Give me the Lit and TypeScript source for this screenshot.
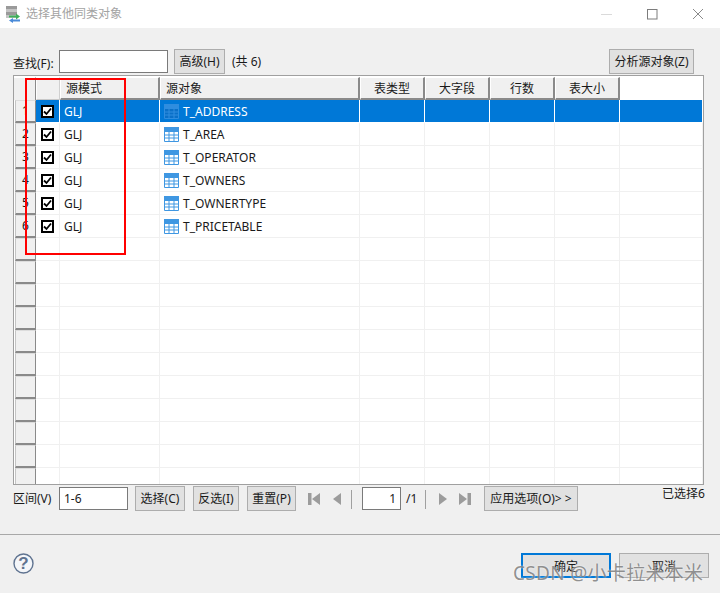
import { LitElement, html, css } from "lit";
import { customElement } from "lit/decorators.js";

const ROWS = ["T_ADDRESS", "T_AREA", "T_OPERATOR", "T_OWNERS", "T_OWNERTYPE", "T_PRICETABLE"];
const TOTAL_ROWS = 17;

const tableIcon = (selected: boolean) => {
  const c = selected ? "#2f8ddf" : "#3f97e2";
  const bg = selected ? "#0a70c8" : "#ffffff";
  return html`<svg class="ticon" width="15" height="15" viewBox="0 0 15 15">
    <rect x="0" y="0" width="15" height="15" fill="${bg}"/>
    <rect x="0" y="0" width="15" height="5" fill="${c}"/>
    <path d="M0.5 5V14.5H14.5V5M0 8H15M0 11H15M5 5V15M10 5V15" fill="none" stroke="${c}" stroke-width="1"/>
  </svg>`;
};

@customElement("app-root")
export class AppRoot extends LitElement {
  static styles = css`
    :host {
      display: block;
      width: 720px;
      height: 593px;
      font-family: "Noto Sans", "Noto Sans CJK SC", sans-serif;
      font-size: 12px;
      color: #1a1a1a;
    }
    .dialog {
      position: relative;
      width: 720px;
      height: 593px;
      background: #f0f0f0;
      display: flex;
      flex-direction: column;
      overflow: hidden;
    }
    .titlebar {
      height: 28px;
      flex: none;
      background: #fff;
      display: flex;
      align-items: center;
      padding-left: 6px;
      gap: 5px;
      color: #a3a3a3;
      font-size: 12px;
    }
    .title-text { flex: 1; padding-bottom: 2px; }
    .winbtns { display: flex; align-items: center; margin-right: -1px; }
    .winbtn { width: 46px; height: 24px; display: flex; align-items: center; justify-content: center; }
    .toolbar {
      height: 47px;
      flex: none;
      box-sizing: border-box;
      padding: 21px 26px 0 13px;
      display: flex;
      align-items: flex-start;
    }
    .label { line-height: 18px; white-space: nowrap; }
    .find-label { margin-top: 6px; width: 46px; }
    .text {
      box-sizing: border-box;
      border: 1px solid #7a7a7a;
      background: #fff;
      font: inherit;
      color: #1a1a1a;
      padding: 0 4px;
      outline: none;
      margin: 0;
    }
    .find { width: 109px; height: 23px; margin-top: 1px; }
    .btn {
      box-sizing: border-box;
      height: 25px;
      border: 1px solid #adadad;
      background: #e1e1e1;
      font: inherit;
      color: #1a1a1a;
      padding: 0 0 1px;
      margin: 0;
      display: flex;
      align-items: center;
      justify-content: center;
      white-space: nowrap;
    }
    .adv { width: 51px; margin-left: 6px; }
    .count { margin-left: 7px; margin-top: 4px; }
    .spacer { flex: 1; }
    .analyze { width: 85px; }
    .table {
      box-sizing: border-box;
      margin: 0 16px 0 13px;
      width: 691px;
      height: 410px;
      flex: none;
      border: 1px solid #a0a0a0;
      background: #fff;
      padding-top: 1px;
      overflow: hidden;
    }
    .row {
      display: grid;
      grid-template-columns: 22px 24px 100px 200px 65px 65px 65px 65px 1fr;
    }
    .head { height: 23px; }
    .hcell {
      box-sizing: border-box;
      background: #f0f0f0;
      border-top: 1px solid #fff;
      border-left: 1px solid #fff;
      border-right: 2px solid #8a8a8a;
      border-bottom: 2px solid #8a8a8a;
      display: flex;
      align-items: center;
      justify-content: center;
      line-height: 1;
      padding-top: 1px;
    }
    .hcell.left { justify-content: flex-start; padding-left: 5px; }
    .hcell.blank { background: #fff; border: 0; }
    .hcell.corner { border-right: 1px solid #8a8a8a; border-bottom: 0; border-left: 0; background: #f0f0f0; }
    .hcell.checkhead { border-right: 1px solid #d0d0d0; border-bottom: 1px solid #c8c8c8; }
    .rows { height: 385px; overflow: hidden; }
    .drow { height: 23px; }
    .cell {
      box-sizing: border-box;
      border-right: 1px solid #f0f0f0;
      border-bottom: 1px solid #f0f0f0;
      display: flex;
      align-items: center;
      padding-left: 4px;
      white-space: nowrap;
      line-height: 1;
    }
    .txt { padding-top: 2px; }
    .num {
      box-sizing: border-box;
      background: #f0f0f0;
      border-top: 1px solid #dcdcdc;
      border-left: 1px solid #c4c4c4;
      border-bottom: 2px solid #8a8a8a;
      border-right: 1px solid #8a8a8a;
      margin-left: 1px;
      text-align: center;
      line-height: 20px;
      color: #1a1a1a;
      overflow: hidden;
    }
    .chk { padding-left: 5px; justify-content: flex-start; }
    .box {
      box-sizing: border-box;
      width: 13px;
      height: 13px;
      border: 2.5px solid #000;
      background: #fff;
      display: flex;
      align-items: center;
      justify-content: center;
    }
    .sel .cell { background: #0078d7; color: #fff; border-bottom-color: #fff; border-right-color: #fff; }
    .ticon { margin-right: 4px; flex: none; }
    .pager {
      height: 50px;
      flex: none;
      box-sizing: border-box;
      padding: 1px 0 0 13px;
      display: flex;
      align-items: flex-start;
      border-bottom: 1px solid #a8a8a8;
    }
    .range-label { width: 46px; margin-top: 4px; }
    .range { width: 69px; height: 23px; margin-top: 1px; }
    .sel-btn { width: 50px; margin-left: 7px; }
    .inv-btn { width: 46px; margin-left: 8px; }
    .reset-btn { width: 49px; margin-left: 8px; }
    .icons { display: flex; align-items: center; height: 24px; margin-top: 1px; }
    .icons svg { display: block; flex: none; }
    .first { margin-left: 12px; }
    .prev { margin-left: 12px; }
    .next { margin-left: 12px; }
    .last { margin-left: 11px; }
    .vsep { width: 1px; height: 19px; background: #a0a0a0; }
    .vsep-a { margin-left: 9px; }
    .page { width: 39px; height: 23px; margin: 1px 0 0 10px; text-align: right; padding-right: 4px; }
    .of { margin: 4px 0 0 5px; width: 19px; }
    .apply { width: 94px; margin-left: 13px; }
    .selected { margin-left: 84px; margin-top: 0; line-height: 16px; }
    .footer {
      flex: 1;
      box-sizing: border-box;
      padding: 18px 11px 0 13px;
      display: flex;
      align-items: flex-start;
    }
    .help { display: block; margin-top: 0; }
    .ok {
      width: 90px;
      height: 25px;
      border: 2px solid #0078d7;
      padding: 0;
    }
    .cancel { width: 90px; margin-left: 8px; padding: 0; }
    .redbox {
      position: absolute;
      left: 25px;
      top: 78px;
      width: 101px;
      height: 177px;
      box-sizing: border-box;
      border: 2px solid #ff0000;
      pointer-events: none;
    }
    .watermark {
      position: absolute;
      left: 513px;
      top: 560px;
      font-size: 19px;
      line-height: 26px;
      letter-spacing: 0.3px;
      color: rgba(110, 110, 110, 0.75);
      text-shadow: 0 0 2px rgba(255, 255, 255, 0.9);
      white-space: nowrap;
      pointer-events: none;
    }
  `;

  render() {
    const rows = Array.from({ length: TOTAL_ROWS }, (_, i) => i);
    return html`
      <div class="dialog">
        <div class="titlebar">
          <svg width="15" height="17" viewBox="0 0 15 17">
            <rect x="0" y="0" width="11" height="3" fill="#9a9a9a"/>
            <rect x="0" y="3" width="11" height="3" fill="#c4c4c4"/>
            <rect x="0" y="6" width="11" height="3" fill="#9a9a9a"/>
            <rect x="0" y="9" width="11" height="3" fill="#c4c4c4"/>
            <path d="M3 9.5H10V7.5L14 10.5L10 13.5V11.5H3Z" fill="#3fae5a"/>
            <path d="M14 13.5H7V12L3 14.5L7 17V15.5H14Z" fill="#4a8ad8"/>
          </svg>
          <span class="title-text">选择其他同类对象</span>
          <div class="winbtns">
            <div class="winbtn"><svg width="11" height="11" viewBox="0 0 11 11"><path d="M0 5.5H11" stroke="#dadada" stroke-width="1"/></svg></div>
            <div class="winbtn"><svg width="11" height="11" viewBox="0 0 11 11"><rect x="0.5" y="0.5" width="9.5" height="9.5" fill="none" stroke="#7c7c7c"/></svg></div>
            <div class="winbtn"><svg width="12" height="12" viewBox="0 0 12 12"><path d="M1 1L11 11M11 1L1 11" stroke="#8a8a8a" stroke-width="1"/></svg></div>
          </div>
        </div>

        <div class="toolbar">
          <span class="label find-label">查找(F):</span>
          <input class="text find" />
          <button class="btn adv">高级(H)</button>
          <span class="label count">(共 6)</span>
          <span class="spacer"></span>
          <button class="btn analyze">分析源对象(Z)</button>
        </div>

        <div class="table">
          <div class="row head">
            <div class="hcell corner"></div>
            <div class="hcell checkhead"></div>
            <div class="hcell left">源模式</div>
            <div class="hcell left">源对象</div>
            <div class="hcell">表类型</div>
            <div class="hcell">大字段</div>
            <div class="hcell">行数</div>
            <div class="hcell">表大小</div>
            <div class="hcell blank"></div>
          </div>
          <div class="rows">
            ${rows.map((i) => {
              const name = ROWS[i];
              return html`<div class="row drow ${i === 0 ? "sel" : ""}">
                <div class="num">${name ? i + 1 : ""}</div>
                <div class="cell chk">
                  ${name
                    ? html`<span class="box"><svg width="9" height="9" viewBox="0 0 9 9"><path d="M1 4.5L3.5 7L8 1.5" fill="none" stroke="#000" stroke-width="1.8"/></svg></span>`
                    : ""}
                </div>
                <div class="cell">${name ? html`<span class="txt">GLJ</span>` : ""}</div>
                <div class="cell">${name ? html`${tableIcon(i === 0)}<span class="txt">${name}</span>` : ""}</div>
                <div class="cell"></div>
                <div class="cell"></div>
                <div class="cell"></div>
                <div class="cell"></div>
                <div class="cell"></div>
              </div>`;
            })}
          </div>
        </div>

        <div class="pager">
          <span class="label range-label">区间(V)</span>
          <input class="text range" value="1-6" />
          <button class="btn sel-btn">选择(C)</button>
          <button class="btn inv-btn">反选(I)</button>
          <button class="btn reset-btn">重置(P)</button>
          <div class="icons">
            <svg class="first" width="12" height="12" viewBox="0 0 12 12"><path d="M0 0H3.5V12H0ZM12 0V12L4 6Z" fill="#9c9c9c"/></svg>
            <svg class="prev" width="10" height="12" viewBox="0 0 10 12"><path d="M9 0V12L1 6Z" fill="#9c9c9c"/></svg>
            <div class="vsep vsep-a"></div>
          </div>
          <input class="text page" value="1" />
          <span class="label of">/1</span>
          <div class="icons">
            <div class="vsep"></div>
            <svg class="next" width="10" height="12" viewBox="0 0 10 12"><path d="M1 0V12L9 6Z" fill="#9c9c9c"/></svg>
            <svg class="last" width="12" height="12" viewBox="0 0 12 12"><path d="M0 0L8 6L0 12ZM8.5 0H12V12H8.5Z" fill="#9c9c9c"/></svg>
          </div>
          <button class="btn apply">应用选项(O)&gt; &gt;</button>
          <span class="label selected">已选择6</span>
        </div>

        <div class="footer">
          <svg class="help" width="21" height="21" viewBox="0 0 21 21">
            <circle cx="10.5" cy="10.5" r="9.5" fill="#f4f6f9" stroke="#5f7390" stroke-width="1.4"/>
            <text x="10.5" y="16" text-anchor="middle" font-family="Liberation Sans, sans-serif" font-weight="700" font-size="17" fill="#5f7390">?</text>
          </svg>
          <span class="spacer"></span>
          <button class="btn ok">确定</button>
          <button class="btn cancel">取消</button>
        </div>

        <div class="redbox"></div>
        <div class="watermark">CSDN @小卡拉米本米</div>
      </div>
    `;
  }
}
